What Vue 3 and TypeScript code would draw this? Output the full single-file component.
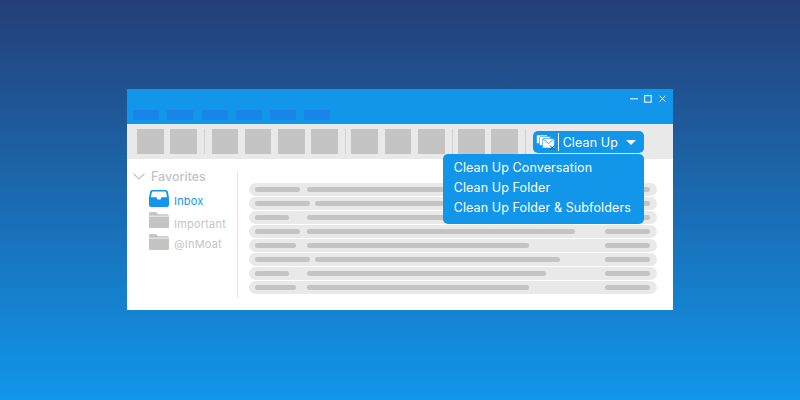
<script setup lang="ts">
const tabs: number[] = [1, 2, 3, 4, 5, 6]
const groups: { count: number; tight: boolean }[] = [
  { count: 2, tight: false },
  { count: 4, tight: true },
  { count: 3, tight: true },
  { count: 2, tight: false },
]
const rows: { left: number; right: number }[] = [
  { left: 45, right: 575 },
  { left: 55, right: 575 },
  { left: 34, right: 575 },
  { left: 45, right: 575 },
  { left: 41, right: 529 },
  { left: 55, right: 560 },
  { left: 34, right: 546 },
  { left: 41, right: 529 },
]
const menuItems: string[] = ['Clean Up Conversation', 'Clean Up Folder', 'Clean Up Folder & Subfolders']
const folders: { name: string; drop: number }[] = [
  { name: 'Important', drop: 7 },
  { name: '@InMoat', drop: 3 },
]

function midWidth(r: { left: number; right: number }): string {
  const start = r.left > 50 ? 315 : 307
  return r.right - start + 'px'
}
function midGap(r: { left: number; right: number }): string {
  const start = r.left > 50 ? 315 : 307
  return start - 254.5 - r.left + 'px'
}
</script>

<template>
  <div class="stage">
    <div class="window">
      <header class="titlebar">
        <div class="controls">
          <svg width="38" height="10" viewBox="0 0 38 10" fill="none" stroke="#cfe9fb" stroke-width="1.3">
            <path d="M2 4.800h8" />
            <rect x="16.600" y="1.600" width="6.600" height="6.600" />
            <path d="M31.500 1.700l6 6M37.500 1.700l-6 6" stroke-width="1" />
          </svg>
        </div>
        <div class="tabs">
          <span v-for="t in tabs" :key="t" class="tab"></span>
        </div>
      </header>

      <div class="toolbar">
        <template v-for="(g, i) in groups" :key="i">
          <span v-for="n in g.count" :key="n" class="tool"></span>
          <span class="sep" :class="{ tight: g.tight }"></span>
        </template>
        <div class="cleanup">
          <svg class="cleanup-icon" width="20" height="18" viewBox="0 0 20 18">
            <g stroke="#1196ea" stroke-width="0.6" fill="#fff">
              <rect x="0.500" y="2" width="11" height="8.500" rx="1" />
              <rect x="3.500" y="3.500" width="11" height="9" rx="1" />
              <rect x="6.500" y="5.500" width="12" height="9.500" rx="1" />
            </g>
            <path d="M7 6L12.500 10.500L18 6" fill="none" stroke="#1196ea" stroke-width="0.8" />
            <path d="M14 12.500l4.500 4.500M18.500 12.500L14 17" fill="none" stroke="#2b4a6b" stroke-width="1" />
          </svg>
          <span class="cleanup-div"></span>
          <span class="cleanup-label">Clean Up</span>
          <svg class="caret" width="10" height="5" viewBox="0 0 10 5"><path d="M0 0h10L5 5z" fill="#fff" /></svg>
          <ul class="menu">
            <li v-for="m in menuItems" :key="m">{{ m }}</li>
          </ul>
        </div>
      </div>

      <div class="body">
        <aside class="sidebar">
          <div class="fav">
            <svg width="12" height="7" viewBox="0 0 12 7" fill="none" stroke="#c4c4c4" stroke-width="1.200">
              <path d="M0.500 0.700L6 6L11.500 0.700" />
            </svg>
            <span>Favorites</span>
          </div>
          <div class="nav-item active">
            <svg width="20" height="17" viewBox="0 0 20 17">
              <path d="M3.500 0h13A2.500 2.500 0 0 1 19 2l1 6v6.500a2.500 2.500 0 0 1-2.500 2.500h-15A2.500 2.500 0 0 1 0 14.500V8l1-6A2.500 2.500 0 0 1 3.500 0z" fill="#1196ea" />
              <path d="M3.800 1.500h12.400a1 1 0 0 1 1 .9l.8 4.900h-5.500l-1 2.200h-3l-1-2.200H2l.8-4.900a1 1 0 0 1 1-.9z" fill="#fff" />
            </svg>
            <span class="nav-text" :style="{ paddingTop: '5px' }">Inbox</span>
          </div>
          <div v-for="f in folders" :key="f.name" class="nav-item">
            <svg width="20" height="16" viewBox="0 0 20 16">
              <path d="M1.500 0h5.500l2 2.200h9.500A1.500 1.500 0 0 1 20 3.700H0V1.500A1.500 1.500 0 0 1 1.500 0z" fill="#c4c4c4" />
              <path d="M0 4.500h20v10a1.500 1.500 0 0 1-1.500 1.500h-17A1.500 1.500 0 0 1 0 14.500z" fill="#c4c4c4" />
            </svg>
            <span class="nav-text" :style="{ paddingTop: f.drop + 'px' }">{{ f.name }}</span>
          </div>
        </aside>

        <main class="list">
          <div v-for="(r, i) in rows" :key="i" class="row">
            <span class="bar" :style="{ width: r.left + 'px', marginRight: midGap(r) }"></span>
            <span class="bar" :style="{ width: midWidth(r) }"></span>
            <span class="bar end"></span>
          </div>
        </main>
      </div>
    </div>
  </div>
</template>

<style>
html,
body {
  margin: 0;
  padding: 0;
}
</style>

<style scoped>
.stage {
  width: 800px;
  height: 400px;
  box-sizing: border-box;
  padding-top: 89px;
  display: flex;
  justify-content: center;
  align-items: flex-start;
  overflow: hidden;
  background: linear-gradient(180deg, #243f77 0%, #1196ea 100%);
  font-family: Inter, "Open Sans", sans-serif;
}
.window {
  width: 546px;
  height: 221px;
  background: #fff;
  display: flex;
  flex-direction: column;
}
.titlebar {
  height: 35px;
  background: #1196ea;
  box-sizing: border-box;
  padding: 5px 7px 4px 6px;
  display: flex;
  flex-direction: column;
  justify-content: space-between;
}
.controls {
  display: flex;
  justify-content: flex-end;
  height: 10px;
}
.tabs {
  display: flex;
  gap: 8.300px;
}
.tab {
  width: 26px;
  height: 10px;
  background: #1a85e8;
}
.toolbar {
  height: 35px;
  background: #e9e9e9;
  box-sizing: border-box;
  padding-left: 10px;
  display: flex;
  align-items: center;
}
.tool {
  width: 26.500px;
  height: 25px;
  background: #c4c4c4;
  margin-right: 6.800px;
  flex: none;
}
.sep {
  width: 1px;
  height: 25px;
  background: #d0d0d0;
  margin: 0 7px 0 0;
  flex: none;
}
.sep.tight {
  margin: 0 5px 0 0.700px;
}
.cleanup {
  position: relative;
  width: 111px;
  height: 22px;
  margin-top: 1px;
  border-radius: 5px;
  background: #1196ea;
  color: #fff;
  display: flex;
  align-items: center;
  padding-left: 3px;
  box-sizing: border-box;
  flex: none;
}
.cleanup-icon {
  flex: none;
}
.cleanup-div {
  width: 1px;
  height: 18px;
  background: #fff;
  margin: 0 4px 0 2px;
  flex: none;
}
.cleanup-label {
  font-size: 12.500px;
  letter-spacing: 0.1px;
  width: 63px;
  flex: none;
  white-space: nowrap;
}
.caret {
  flex: none;
  margin-top: 1px;
}
.menu {
  position: absolute;
  top: 23px;
  right: 0;
  width: 201px;
  height: 70px;
  margin: 0;
  padding: 4px 0 0 11px;
  box-sizing: border-box;
  list-style: none;
  background: #1196ea;
  border-radius: 5px;
  font-size: 12.500px;
  letter-spacing: 0.11px;
  line-height: 20px;
  white-space: nowrap;
}
.body {
  flex: 1;
  display: flex;
  padding: 12px 16px 12px 6px;
  min-height: 0;
}
.sidebar {
  width: 105px;
  flex: none;
  border-right: 1px solid #e6e6e6;
  box-sizing: border-box;
  display: flex;
  flex-direction: column;
}
.fav {
  display: flex;
  align-items: center;
  gap: 6px;
  height: 10px;
  margin-bottom: 9px;
  color: #c4c4c4;
  font-size: 12.500px;
  font-weight: 500;
}
.nav-item {
  display: flex;
  align-items: center;
  gap: 5px;
  margin-left: 16px;
  height: 16px;
  margin-bottom: 6px;
  color: #c4c4c4;
  font-size: 11px;
  letter-spacing: 0.2px;
  white-space: nowrap;
}
.nav-item.active {
  height: 17px;
  margin-bottom: 5px;
  color: #1196ea;
}
.list {
  flex: 1;
  padding: 12px 0 0 11px;
  display: flex;
  flex-direction: column;
  gap: 1px;
}
.row {
  height: 13px;
  border-radius: 6.500px;
  background: #e9e9e9;
  display: flex;
  align-items: center;
  padding: 0 7px 0 5.500px;
  flex: none;
}
.bar {
  height: 5px;
  border-radius: 2.500px;
  background: #c4c4c4;
  flex: none;
}
.bar.end {
  width: 45px;
  margin-left: auto;
}
</style>
